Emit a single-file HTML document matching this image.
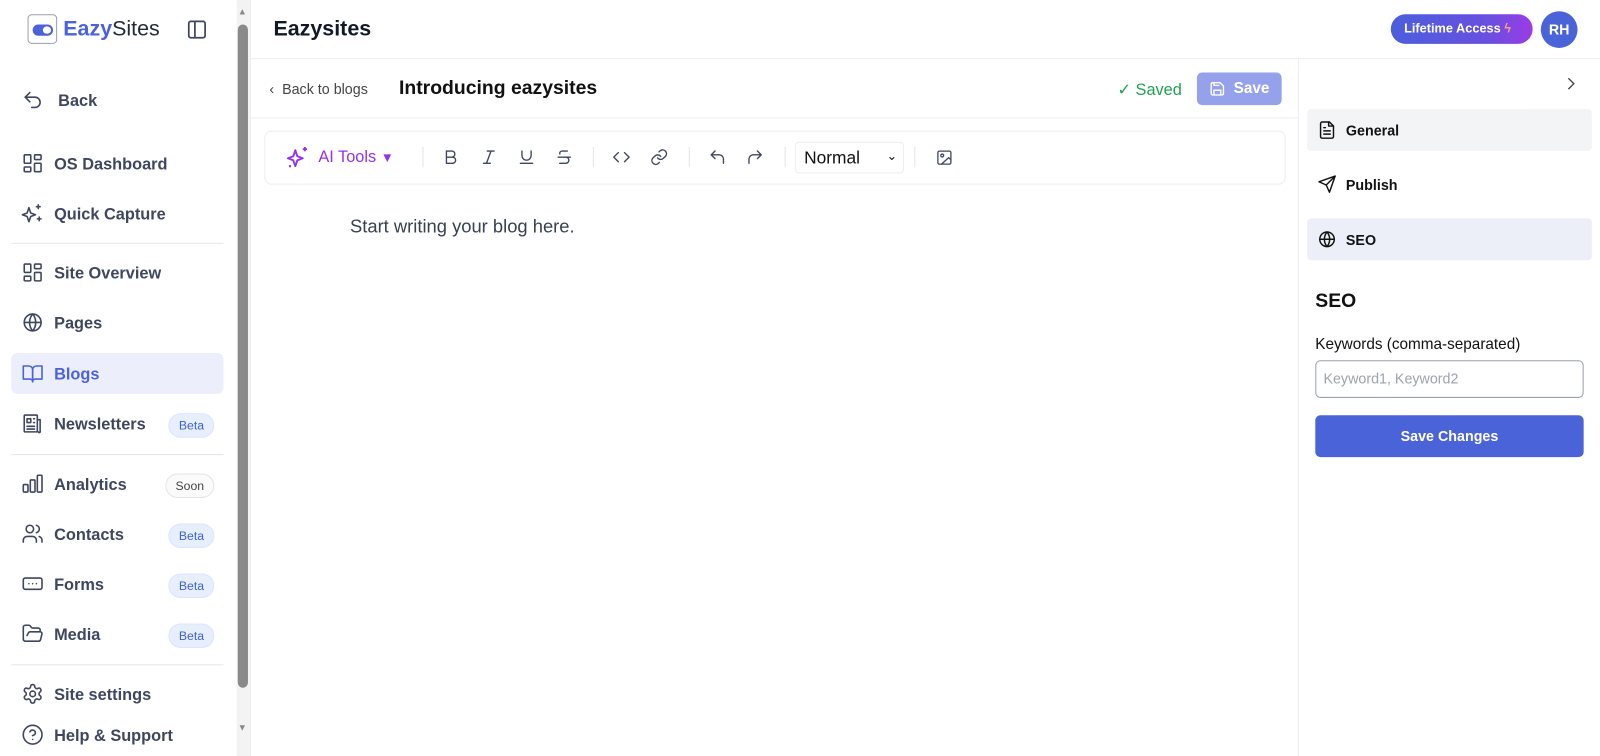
<!DOCTYPE html>
<html><head><meta charset="utf-8"><style>
*{box-sizing:border-box;margin:0;padding:0}
html,body{width:1600px;height:741px;overflow:hidden;background:#fff}
#w{position:absolute;left:0;top:0;width:1568px;height:726px;transform:scale(1.0204);transform-origin:0 0;font-family:"Liberation Sans",sans-serif;color:#0f172a}
.a{position:absolute}
.nav{position:absolute;left:11px;width:208px;height:40px;display:flex;align-items:center;padding-left:10px;padding-top:3px;font-size:16px;font-weight:bold;color:#3f4660;border-radius:6px}
.nav svg{width:22px;height:22px;margin-right:10px;margin-top:-3px;stroke:#3f4660;fill:none;stroke-width:1.7;stroke-linecap:round;stroke-linejoin:round}
.badge{position:absolute;right:9px;font-size:12px;padding:4px 9px;border-radius:12px;background:#e8effc;color:#3b62d6;border:1px solid #dbe5fb;font-weight:normal}
.badge.s{background:#fafafa;color:#444;border-color:#e5e5e5}
.hr{position:absolute;left:11px;width:208px;height:1px;background:#e5e7eb}
.tb svg{position:absolute;width:18px;height:18px;stroke:#3f4660;fill:none;stroke-width:1.8;stroke-linecap:round;stroke-linejoin:round}
.sep{position:absolute;top:144px;width:1px;height:20px;background:#e2e4e8}
.rp{position:absolute;left:1281px;width:279px;height:41px;display:flex;align-items:center;padding-left:10px;font-size:14px;font-weight:bold;color:#111;border-radius:4px}
.rp svg{width:19px;height:19px;margin-right:9px;stroke:#111;fill:none;stroke-width:1.8;stroke-linecap:round;stroke-linejoin:round}
</style></head><body><div id="w">
<div class="a" style="left:27px;top:14px;width:29px;height:29px;border:1px solid #9aa0aa;border-radius:4px"></div>
<div class="a" style="left:32px;top:24px;width:20px;height:11px;border-radius:6px;background:#4b63d8"></div>
<div class="a" style="left:42px;top:26px;width:8px;height:7px;border-radius:4px;background:#fff"></div>
<div class="a" style="left:62px;top:17px;font-size:21px;color:#4b63d8;font-weight:bold">Eazy<span style="color:#1f2937;font-weight:normal">Sites</span></div>
<svg class="a" style="left:183px;top:19px" width="20" height="20" viewBox="0 0 20 20" fill="none" stroke="#3f4660" stroke-width="1.7"><rect x="2" y="2" width="16" height="16" rx="2"/><path d="M8 2v16"/></svg>
<div class="a" style="left:232px;top:0;width:13px;height:741px;background:#f3f3f3"></div>
<div class="a" style="left:233px;top:24px;width:10px;height:650px;border-radius:5px;background:#8a8a8a"></div>
<div class="a" style="left:233px;top:6px;font-size:9px;color:#888">▲</div>
<div class="a" style="left:233px;top:708px;font-size:9px;color:#888">▼</div>
<div class="a" style="left:245px;top:0;width:1px;height:741px;background:#eceef1"></div>

<div class="nav" style="top:78px"><svg viewBox="0 0 24 24"><path d="M9 14L4 9l5-5"/><path d="M4 9h10.5a5.5 5.5 0 010 11H11"/></svg><span style="margin-left:4px">Back</span></div>
<div class="nav" style="top:140px"><svg viewBox="0 0 24 24"><rect x="3" y="3" width="7" height="9" rx="1"/><rect x="14" y="3" width="7" height="5" rx="1"/><rect x="14" y="12" width="7" height="9" rx="1"/><rect x="3" y="16" width="7" height="5" rx="1"/></svg>OS Dashboard</div>
<div class="nav" style="top:189px"><svg viewBox="0 0 24 24"><path d="M9.9 15.5L8 21l-1.9-5.5L1 13.6l5.1-1.9L8 6l1.9 5.7 5.1 1.9z"/><path d="M18 3v4M16 5h4M19 16v4M17 18h4"/></svg>Quick Capture</div>
<div class="hr" style="top:238px"></div>
<div class="nav" style="top:247px"><svg viewBox="0 0 24 24"><rect x="3" y="3" width="7" height="9" rx="1"/><rect x="14" y="3" width="7" height="5" rx="1"/><rect x="14" y="12" width="7" height="9" rx="1"/><rect x="3" y="16" width="7" height="5" rx="1"/></svg>Site Overview</div>
<div class="nav" style="top:296px"><svg viewBox="0 0 24 24"><circle cx="12" cy="12" r="9"/><path d="M3 12h18M12 3a14 14 0 010 18M12 3a14 14 0 000 18"/></svg>Pages</div>
<div class="nav" style="top:346px;background:#eceffb;color:#4b63d8"><svg viewBox="0 0 24 24" style="stroke:#4b63d8"><path d="M2 4h6a4 4 0 014 4v13a3 3 0 00-3-3H2z"/><path d="M22 4h-6a4 4 0 00-4 4v13a3 3 0 013-3h7z"/></svg>Blogs</div>
<div class="nav" style="top:395px"><svg viewBox="0 0 24 24"><rect x="3" y="3" width="14" height="18" rx="1"/><path d="M17 8h3v12a1 1 0 01-2 1M6 7h4v4H6zM13 7h1M13 11h1M6 15h8M6 18h8"/></svg>Newsletters<span class="badge">Beta</span></div>
<div class="hr" style="top:445px"></div>
<div class="nav" style="top:454px"><svg viewBox="0 0 24 24"><rect x="2" y="13" width="5" height="8" rx="1"/><rect x="9.5" y="8" width="5" height="13" rx="1"/><rect x="17" y="3" width="5" height="18" rx="1"/></svg>Analytics<span class="badge s">Soon</span></div>
<div class="nav" style="top:503px"><svg viewBox="0 0 24 24"><circle cx="9" cy="7" r="4"/><path d="M2 21v-2a4 4 0 014-4h6a4 4 0 014 4v2M16 3.1a4 4 0 010 7.8M22 21v-2a4 4 0 00-3-3.9"/></svg>Contacts<span class="badge">Beta</span></div>
<div class="nav" style="top:552px"><svg viewBox="0 0 24 24"><rect x="2" y="6" width="20" height="12" rx="2"/><path d="M8 12h.01M12 12h.01M16 12h.01"/></svg>Forms<span class="badge">Beta</span></div>
<div class="nav" style="top:601px"><svg viewBox="0 0 24 24"><path d="M6 14l1.5-2.9A2 2 0 019.2 10H20a2 2 0 011.9 2.5l-1.5 6A2 2 0 0118.4 20H4a2 2 0 01-2-2V5a2 2 0 012-2h3.9a2 2 0 011.7.9l.8 1.2a2 2 0 001.7.9H18a2 2 0 012 2v2"/></svg>Media<span class="badge">Beta</span></div>
<div class="hr" style="top:651px"></div>
<div class="nav" style="top:660px"><svg viewBox="0 0 24 24"><circle cx="12" cy="12" r="3"/><path d="M12.2 2h-.4a2 2 0 00-2 2v.2a2 2 0 01-1 1.7l-.4.3a2 2 0 01-2 0l-.2-.1a2 2 0 00-2.7.7l-.2.4a2 2 0 00.7 2.7l.2.1a2 2 0 011 1.7v.5a2 2 0 01-1 1.7l-.2.1a2 2 0 00-.7 2.7l.2.4a2 2 0 002.7.7l.2-.1a2 2 0 012 0l.4.3a2 2 0 011 1.7v.2a2 2 0 002 2h.4a2 2 0 002-2v-.2a2 2 0 011-1.7l.4-.3a2 2 0 012 0l.2.1a2 2 0 002.7-.7l.2-.4a2 2 0 00-.7-2.7l-.2-.1a2 2 0 01-1-1.7v-.5a2 2 0 011-1.7l.2-.1a2 2 0 00.7-2.7l-.2-.4a2 2 0 00-2.7-.7l-.2.1a2 2 0 01-2 0l-.4-.3a2 2 0 01-1-1.7V4a2 2 0 00-2-2z"/></svg>Site settings</div>
<div class="nav" style="top:700px"><svg viewBox="0 0 24 24"><circle cx="12" cy="12" r="10"/><path d="M9.1 9a3 3 0 015.8 1c0 2-3 3-3 3M12 17h.01"/></svg>Help &amp; Support</div>

<div class="a" style="left:268px;top:17px;font-size:21px;font-weight:bold;color:#111827">Eazysites</div>
<div class="a" style="left:1363px;top:14px;width:139px;height:29px;border-radius:15px;background:linear-gradient(90deg,#4b5fdc,#6a4fe0 70%,#9b3be6);color:#fff;font-size:12.5px;font-weight:bold;line-height:29px;padding-left:13px">Lifetime Access <span style="color:#f59e8a">ϟ</span></div>
<div class="a" style="left:1510px;top:11px;width:36px;height:36px;border-radius:50%;background:#4b63d8;color:#fff;font-size:14px;font-weight:bold;text-align:center;line-height:36px">RH</div>
<div class="a" style="left:246px;top:57px;width:1322px;height:1px;background:#eceef1"></div>

<div class="a" style="left:264px;top:79px;font-size:14px;color:#444">&lsaquo;&nbsp; Back to blogs</div>
<div class="a" style="left:391px;top:76px;font-size:19px;font-weight:bold;color:#111">Introducing eazysites</div>
<div class="a" style="left:1095px;top:78px;font-size:16px;color:#22a052">✓ Saved</div>
<div class="a" style="left:1173px;top:71px;width:83px;height:32px;border-radius:5px;background:#95a1ea;color:#fff;font-size:15px;font-weight:bold;line-height:32px;padding-left:36px">Save</div>
<svg class="a" style="left:1185px;top:79px" width="16" height="16" viewBox="0 0 24 24" fill="none" stroke="#fff" stroke-width="2"><path d="M5 3h11l5 5v11a2 2 0 01-2 2H5a2 2 0 01-2-2V5a2 2 0 012-2z"/><path d="M7 21v-7h10v7M7 3v4h8"/></svg>
<div class="a" style="left:246px;top:115px;width:1026px;height:1px;background:#eceef1"></div>
<div class="a" style="left:1272px;top:57px;width:1px;height:684px;background:#eceef1"></div>

<div class="a" style="left:259px;top:128px;width:1001px;height:53px;border:1px solid #eceef1;border-radius:7px"></div>
<svg class="a" style="left:279px;top:142px" width="25" height="25" viewBox="0 0 24 24" fill="none" stroke="#9333ea" stroke-width="1.8" stroke-linejoin="round"><path d="M9.9 15.5L8 21l-1.9-5.5L1 13.6l5.1-1.9L8 6l1.9 5.7 5.1 1.9z" transform="translate(2,-1)"/><path d="M19 2v4M17 4h4M5 19v2M4 20h2"/></svg>
<div class="a" style="left:312px;top:146px;font-size:16px;color:#9333ea">AI Tools <span style="font-size:13px">▼</span></div>
<div class="sep" style="left:414px"></div>
<div class="tb">
<svg style="left:433px;top:145px" viewBox="0 0 24 24"><path d="M6 4h7a4 4 0 010 8H6zM6 12h8a4 4 0 010 8H6z"/></svg>
<svg style="left:470px;top:145px" viewBox="0 0 24 24"><path d="M19 4h-9M14 20H5M15 4L9 20"/></svg>
<svg style="left:507px;top:145px" viewBox="0 0 24 24"><path d="M6 4v6a6 6 0 0012 0V4M4 20h16"/></svg>
<svg style="left:544px;top:145px" viewBox="0 0 24 24"><path d="M16 4H9a3 3 0 00-2.8 4M14 12a4 4 0 010 8H6M4 12h16"/></svg>
<svg style="left:600px;top:145px" viewBox="0 0 24 24"><path d="M16 18l6-6-6-6M8 6l-6 6 6 6"/></svg>
<svg style="left:637px;top:145px" viewBox="0 0 24 24"><path d="M10 13a5 5 0 007.5.5l3-3a5 5 0 00-7-7l-1.7 1.7M14 11a5 5 0 00-7.5-.5l-3 3a5 5 0 007 7l1.7-1.7"/></svg>
<svg style="left:694px;top:145px" viewBox="0 0 24 24"><path d="M9 14L4 9l5-5M4 9h10.5a5.5 5.5 0 015.5 5.5V20"/></svg>
<svg style="left:731px;top:145px" viewBox="0 0 24 24"><path d="M15 14l5-5-5-5M20 9H9.5A5.5 5.5 0 004 14.5V20"/></svg>
<svg style="left:917px;top:146px;width:17px;height:17px" viewBox="0 0 24 24"><rect x="3" y="3" width="18" height="18" rx="2"/><circle cx="9" cy="9" r="2"/><path d="M21 15l-3-3-10 9"/></svg>
</div>
<div class="sep" style="left:581px"></div>
<div class="sep" style="left:675px"></div>
<div class="sep" style="left:769px"></div>
<div class="sep" style="left:896px"></div>
<div class="a" style="left:779px;top:139px;width:107px;height:31px;border:1px solid #eceef1;border-radius:4px;font-size:17px;color:#111;line-height:29px;padding-left:8px">Normal<span style="position:absolute;right:6px;top:-1px;font-size:12px">⌄</span></div>
<div class="a" style="left:343px;top:212px;font-size:18px;color:#374151">Start writing your blog here.</div>

<svg class="a" style="left:1531px;top:74px" width="16" height="16" viewBox="0 0 24 24" fill="none" stroke="#444" stroke-width="2"><path d="M9 4l8 8-8 8"/></svg>
<div class="rp" style="top:107px;background:#f3f4f6"><svg viewBox="0 0 24 24"><path d="M15 2H6a2 2 0 00-2 2v16a2 2 0 002 2h12a2 2 0 002-2V7z"/><path d="M14 2v5h5M8 13h8M8 17h8M8 9h2"/></svg>General</div>
<div class="rp" style="top:160px"><svg viewBox="0 0 24 24"><path d="M22 2L2 9l9 4 4 9z"/><path d="M22 2L11 13"/></svg>Publish</div>
<div class="rp" style="top:214px;background:#eceef8"><svg viewBox="0 0 24 24"><circle cx="12" cy="12" r="9"/><path d="M3 12h18M12 3a14 14 0 010 18M12 3a14 14 0 000 18"/></svg>SEO</div>
<div class="a" style="left:1289px;top:285px;font-size:19px;font-weight:bold;color:#111">SEO</div>
<div class="a" style="left:1289px;top:329px;font-size:15px;color:#111">Keywords (comma-separated)</div>
<div class="a" style="left:1289px;top:353px;width:263px;height:37px;border:1px solid #9aa0aa;border-radius:5px;font-size:14px;color:#9ca3af;line-height:35px;padding-left:7px">Keyword1, Keyword2</div>
<div class="a" style="left:1289px;top:407px;width:263px;height:41px;border-radius:5px;background:#4b63d8;color:#fff;font-size:14px;font-weight:bold;text-align:center;line-height:41px">Save Changes</div>
</div></body></html>
